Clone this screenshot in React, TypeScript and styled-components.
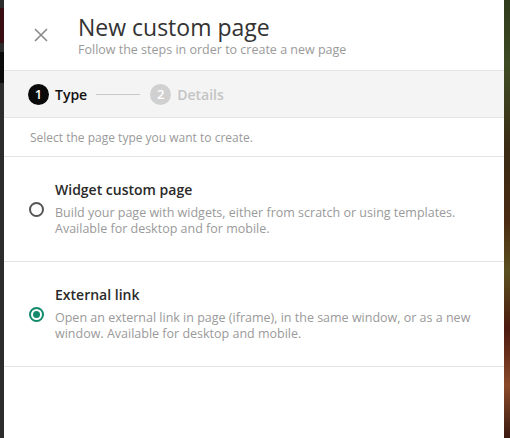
import React, { useState } from "react";
import styled, { createGlobalStyle } from "styled-components";

const Global = createGlobalStyle`
  html, body { margin: 0; padding: 0; }
  body { font-family: "Open Sans", "Noto Sans", sans-serif; background: #2b2b2b; }
`;

const Screen = styled.div`
  display: flex;
  height: 438px;
  width: 510px;
  overflow: hidden;
`;

const LeftStrip = styled.div`
  width: 4px;
  flex: none;
  background: #2c2c2c;
  display: flex;
  flex-direction: column;
  padding-top: 8px;
  gap: 9px;
`;

const StripBlock = styled.div<{ $color: string; $h: number }>`
  height: ${(p) => p.$h}px;
  background: ${(p) => p.$color};
`;

const RightStrip = styled.div`
  width: 6px;
  flex: none;
  background: linear-gradient(
    180deg,
    #2f3a1c 0%,
    #3d4a22 15%,
    #3a2a14 35%,
    #4a2a12 50%,
    #5a5020 62%,
    #4c1a10 75%,
    #8a4a2a 88%,
    #3a1a10 100%
  );
`;

const Panel = styled.div`
  flex: 1;
  background: #fff;
  display: flex;
  flex-direction: column;
`;

const Header = styled.div`
  height: 70px;
  border-bottom: 1px solid #e4e4e4;
  display: flex;
  align-items: flex-start;
`;

const Close = styled.button`
  border: none;
  background: none;
  padding: 0;
  margin: 28px 0 0 30px;
  width: 14px;
  height: 14px;
  display: flex;
  cursor: pointer;
`;

const TitleBlock = styled.div`
  margin-left: 30px;
  padding-top: 12px;
  display: flex;
  flex-direction: column;
`;

const Title = styled.h1`
  margin: 0;
  font-size: 23px;
  font-weight: 400;
  line-height: 30px;
  color: #333;
`;

const Subtitle = styled.div`
  font-size: 12.5px;
  line-height: 16px;
  color: #9a9a9a;
`;

const Stepper = styled.div`
  height: 46px;
  background: #f4f4f4;
  border-bottom: 1px solid #e4e4e4;
  display: flex;
  align-items: center;
  padding-left: 24px;
`;

const Step = styled.div<{ $active?: boolean }>`
  display: flex;
  align-items: center;
  gap: 6px;
  font-size: 14px;
  font-weight: 600;
  color: ${(p) => (p.$active ? "#111" : "#c4c4c4")};
`;

const StepNum = styled.span<{ $active?: boolean }>`
  width: 21px;
  height: 21px;
  border-radius: 50%;
  background: ${(p) => (p.$active ? "#0a0a0a" : "#d0d0d0")};
  color: #fff;
  font-size: 13px;
  font-weight: 600;
  display: flex;
  align-items: center;
  justify-content: center;
`;

const StepLine = styled.div`
  width: 44px;
  height: 1px;
  background: #c8c8c8;
  margin: 0 10px 0 9px;
`;

const Intro = styled.div`
  height: 38px;
  border-bottom: 1px solid #e4e4e4;
  display: flex;
  align-items: center;
  padding-left: 26px;
  font-size: 12px;
  color: #9a9a9a;
`;

const Option = styled.label`
  height: 104px;
  border-bottom: 1px solid #e4e4e4;
  display: flex;
  align-items: center;
  padding-left: 25px;
  cursor: pointer;
`;

const Radio = styled.span<{ $checked?: boolean }>`
  width: 15px;
  height: 15px;
  box-sizing: border-box;
  border-radius: 50%;
  border: 2px solid ${(p) => (p.$checked ? "#138a6c" : "#555")};
  flex: none;
  display: flex;
  align-items: center;
  justify-content: center;
  &::after {
    content: "";
    display: ${(p) => (p.$checked ? "block" : "none")};
    width: 7px;
    height: 7px;
    border-radius: 50%;
    background: #138a6c;
  }
`;

const OptionText = styled.div`
  margin-left: 11px;
  margin-bottom: 2px;
  display: flex;
  flex-direction: column;
  gap: 5px;
`;

const OptionTitle = styled.div`
  font-size: 14px;
  font-weight: 600;
  line-height: 20px;
  color: #2a2a2a;
`;

const OptionDesc = styled.div`
  font-size: 12.5px;
  line-height: 16px;
  color: #9a9a9a;
  max-width: 420px;
`;

const options = [
  {
    id: "widget",
    title: "Widget custom page",
    desc: "Build your page with widgets, either from scratch or using templates. Available for desktop and for mobile.",
  },
  {
    id: "link",
    title: "External link",
    desc: "Open an external link in page (iframe), in the same window, or as a new window. Available for desktop and mobile.",
  },
];

export default function App() {
  const [selected, setSelected] = useState("link");
  return (
    <>
      <Global />
      <Screen>
        <LeftStrip>
          <StripBlock $color="#3a0d12" $h={35} />
          <StripBlock $color="#0b0b0b" $h={31} />
        </LeftStrip>
        <Panel>
          <Header>
            <Close aria-label="Close">
              <svg width="14" height="14" viewBox="0 0 14 14">
                <path d="M1 1 L13 13 M13 1 L1 13" stroke="#8a8a8a" strokeWidth="1.6" fill="none" />
              </svg>
            </Close>
            <TitleBlock>
              <Title>New custom page</Title>
              <Subtitle>Follow the steps in order to create a new page</Subtitle>
            </TitleBlock>
          </Header>
          <Stepper>
            <Step $active>
              <StepNum $active>1</StepNum>
              Type
            </Step>
            <StepLine />
            <Step>
              <StepNum>2</StepNum>
              Details
            </Step>
          </Stepper>
          <Intro>Select the page type you want to create.</Intro>
          {options.map((o) => (
            <Option key={o.id} onClick={() => setSelected(o.id)}>
              <Radio $checked={selected === o.id} />
              <OptionText>
                <OptionTitle>{o.title}</OptionTitle>
                <OptionDesc>{o.desc}</OptionDesc>
              </OptionText>
            </Option>
          ))}
        </Panel>
        <RightStrip />
      </Screen>
    </>
  );
}
